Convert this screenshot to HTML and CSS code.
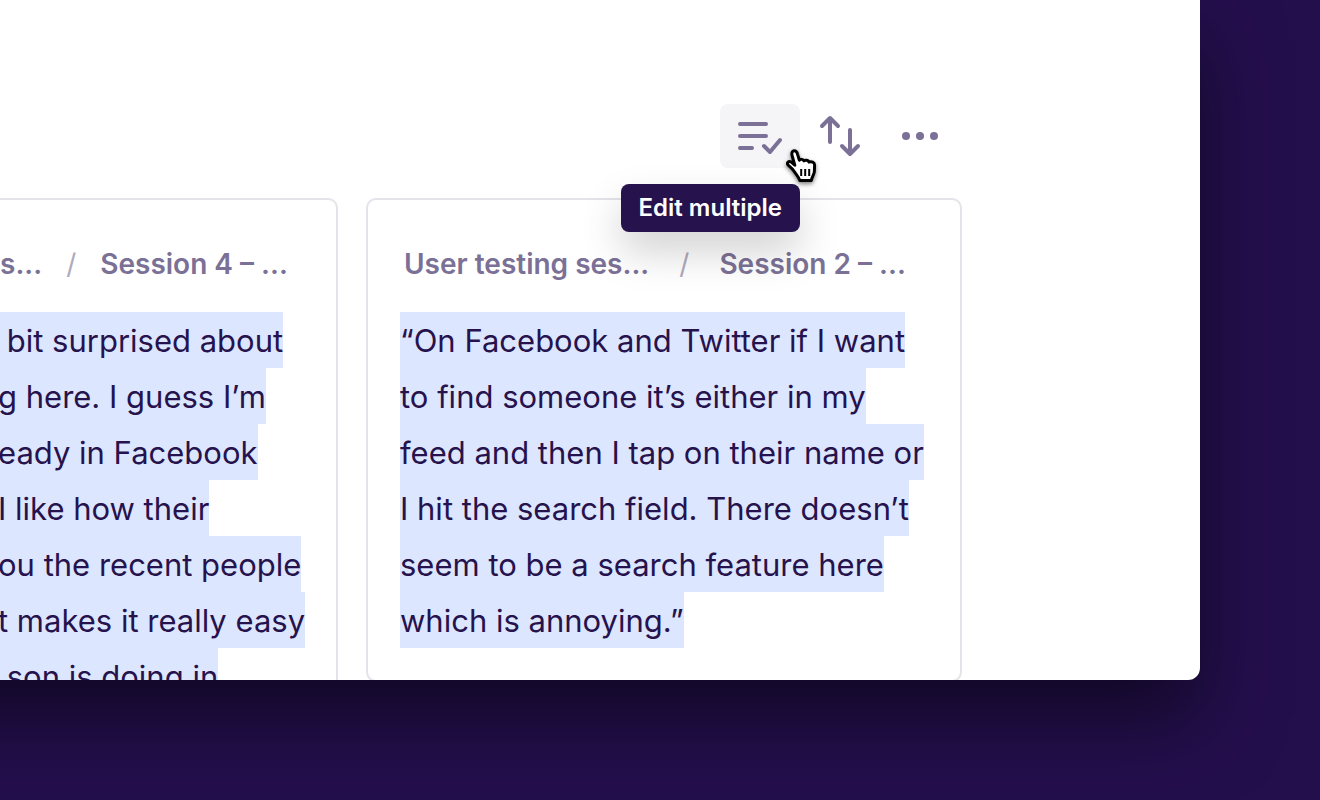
FILE: index.html
```html
<!DOCTYPE html>
<html lang="en">
<head>
<meta charset="utf-8">
<title>Highlights</title>
<link rel="stylesheet" href="styles.css">
</head>
<body>
<main class="window">
  <div class="toolbar">
    <div class="tool">
      <button class="tool-button active" type="button" aria-label="Edit multiple" aria-describedby="edit-tip">
        <svg class="icon" viewBox="0 0 48 48" aria-hidden="true"><path d="M4 12h26M4 24h26M4 36h12M28 34l6 6 10-12"/></svg>
      </button>
      <span class="tooltip" id="edit-tip" role="tooltip">Edit multiple</span>
      <svg class="pointer" viewBox="0 0 36 36" aria-hidden="true">
        <path d="M9.500 22.500C8 20 5.500 18.500 4.300 17.200C2.300 15 4.500 12.600 7 13.900L10.800 17.200L8.200 8C7.300 4.600 8.200 3 10 2.800C12 2.600 13 4 13.600 6.300L15.300 12.200C16 11 18.800 11 20 12.800C21.500 11.700 24 12 25 14C27.500 13.100 30.600 14.200 30.600 17L30.400 23C30.400 26.500 28.400 27.500 27.300 32.500H15.800C15 29 12 26.500 9.500 22.500Z"/>
        <path class="pointer-lines" d="M17.200 21v7M21.200 21v7M25.200 21v7"/>
      </svg>
    </div>
    <button class="tool-button" type="button" aria-label="Sort">
      <svg class="icon" viewBox="0 0 48 48" aria-hidden="true"><path d="M14 30V7M6 14l8-8 8 8M34 18v23M26 34l8 8 8-8"/></svg>
    </button>
    <button class="tool-button" type="button" aria-label="More options">
      <svg class="icon" viewBox="0 0 48 48" aria-hidden="true"><g class="dots"><circle cx="10" cy="24" r="4"/><circle cx="24" cy="24" r="4"/><circle cx="38" cy="24" r="4"/></g></svg>
    </button>
  </div>
  <div class="cards">
    <article class="card card-cut">
      <nav class="crumbs" aria-label="Source">
        <a href="#">s...</a><span class="slash">/</span><a href="#">Session 4 – ...</a>
      </nav>
      <p class="quote">
        <mark> bit surprised about</mark>
        <mark>g here. I guess I’m</mark>
        <mark>eady in Facebook</mark>
        <mark>I like how their</mark>
        <mark>ou the recent people</mark>
        <mark>t makes it really easy</mark>
        <mark> son is doing in</mark>
      </p>
    </article>
    <article class="card">
      <nav class="crumbs" aria-label="Source">
        <a href="#">User testing ses...</a><span class="slash">/</span><a href="#">Session 2 – ...</a>
      </nav>
      <p class="quote">
        <mark>“On Facebook and Twitter if I want</mark>
        <mark>to find someone it’s either in my</mark>
        <mark>feed and then I tap on their name or</mark>
        <mark>I hit the search field. There doesn’t</mark>
        <mark>seem to be a search feature here</mark>
        <mark>which is annoying.”</mark>
      </p>
    </article>
  </div>
</main>
</body>
</html>
```
FILE: styles.css
```css
* { box-sizing: border-box; }

body {
  margin: 0;
  height: 100vh;
  padding: 0 120px 120px 0;
  overflow: hidden;
  background: #240f4d;
  color: #26134d;
  font-family: Inter, "Liberation Sans", sans-serif;
}

/* The window runs on past the left edge of the page. */
.window {
  height: 100%;
  margin-left: -160px;
  padding: 104px 0 0 160px;
  overflow: hidden;
  background: #fff;
  border-radius: 0 0 12px 0;
  box-shadow: 0 40px 80px rgba(0, 0, 0, 0.5);
}

.toolbar {
  display: flex;
  justify-content: flex-end;
  padding-right: 240px;
}

.tool { position: relative; z-index: 1; }

.tool-button {
  display: flex;
  align-items: center;
  justify-content: center;
  width: 80px;
  height: 64px;
  padding: 0;
  border: 0;
  border-radius: 8px;
  background: transparent;
  color: #7b7196;
}

.active { background: #f5f5f8; }

.icon {
  width: 48px;
  height: 48px;
  fill: none;
  stroke: currentColor;
  stroke-width: 4;
  stroke-linecap: round;
  stroke-linejoin: round;
}

.dots { fill: currentColor; stroke: none; }

.tooltip {
  position: absolute;
  top: 80px;
  right: 0;
  padding: 0 18px;
  border-radius: 8px;
  background: #26134d;
  box-shadow: 0 20px 40px rgba(0, 0, 0, 0.18);
  color: #fff;
  font-size: 24px;
  font-weight: 600;
  line-height: 48px;
  white-space: nowrap;
}

.pointer {
  position: absolute;
  top: 44px;
  left: 64px;
  width: 36px;
  height: 36px;
  fill: #fff;
  stroke: #000;
  stroke-width: 3;
  stroke-linejoin: round;
  filter: drop-shadow(0 2px 2px rgba(0, 0, 0, 0.5));
}

.pointer-lines { stroke-width: 2; }

.cards {
  display: grid;
  grid-template-columns: minmax(0, 338fr) minmax(0, 596fr);
  gap: 28px;
  align-items: start;
  margin-top: 30px;
  padding-right: 238px;
}

.card {
  padding: 44px 32px 32px;
  border: 2px solid #e5e3ea;
  border-radius: 10px;
  white-space: nowrap;
}

.crumbs {
  display: flex;
  align-items: center;
  gap: 30px;
  padding-left: 4px;
  font-size: 28px;
  font-weight: 600;
  line-height: 40px;
}

.crumbs a { color: #7b7196; text-decoration: none; }

.slash { color: #b0aac0; font-weight: 400; }

.card-cut {
  padding-left: 0;
  border-left: 0;
  border-radius: 0 10px 0 0;
}

.card-cut .crumbs {
  gap: 24px;
  padding-left: 0;
}

.quote {
  display: flex;
  flex-direction: column;
  align-items: flex-start;
  margin: 28px 0 0;
  font-size: 31px;
  line-height: 56px;
}

.card-cut .quote { margin-left: -2px; }

.quote mark {
  height: 56px;
  background: #dde6ff;
  color: inherit;
  line-height: 58px;
  white-space: pre;
}
```
